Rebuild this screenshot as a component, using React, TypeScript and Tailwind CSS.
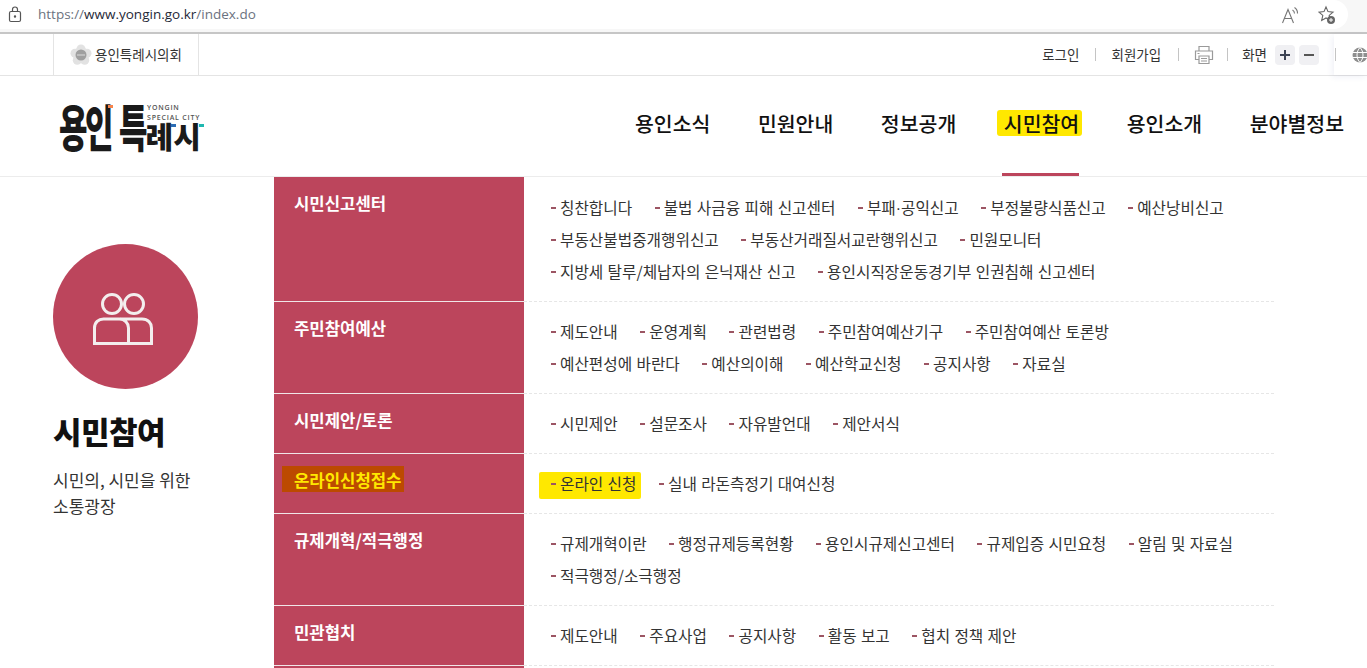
import React from "react";

const font = { fontFamily: '"Noto Sans CJK KR", "Noto Sans", sans-serif' };

type Row = { title: string; lines: string[][]; mark?: boolean };
const rows: Row[] = [
  { title: "시민신고센터", lines: [["칭찬합니다", "불법 사금융 피해 신고센터", "부패·공익신고", "부정불량식품신고", "예산낭비신고"], ["부동산불법중개행위신고", "부동산거래질서교란행위신고", "민원모니터"], ["지방세 탈루/체납자의 은닉재산 신고", "용인시직장운동경기부 인권침해 신고센터"]] },
  { title: "주민참여예산", lines: [["제도안내", "운영계획", "관련법령", "주민참여예산기구", "주민참여예산 토론방"], ["예산편성에 바란다", "예산의이해", "예산학교신청", "공지사항", "자료실"]] },
  { title: "시민제안/토론", lines: [["시민제안", "설문조사", "자유발언대", "제안서식"]] },
  { title: "온라인신청접수", mark: true, lines: [["온라인 신청", "실내 라돈측정기 대여신청"]] },
  { title: "규제개혁/적극행정", lines: [["규제개혁이란", "행정규제등록현황", "용인시규제신고센터", "규제입증 시민요청", "알림 및 자료실"], ["적극행정/소극행정"]] },
  { title: "민관협치", lines: [["제도안내", "주요사업", "공지사항", "활동 보고", "협치 정책 제안"]] },
  { title: "", lines: [[""]] },
];

const navs = ["용인소식", "민원안내", "정보공개", "시민참여", "용인소개", "분야별정보"];

function Item({ text, hl }: { text: string; hl?: boolean }) {
  const parts = text.split("·");
  return (
    <span className={hl ? "relative flex items-center" : "flex items-center"}>
      {hl && <span className="absolute left-[-11px] right-[-5px] top-[0px] bottom-[-3px] bg-[#ffe800] rounded-[2px]" />}
      <span className="relative ml-[1px] w-[5px] h-[2px] bg-[#9c5563] mr-[4px]" />
      <span className="relative">
        {parts.length > 1 ? (
          <>
            {parts[0]}
            <span style={{ fontFamily: '"Liberation Sans", sans-serif' }}>·</span>
            {parts[1]}
          </>
        ) : (
          text
        )}
      </span>
    </span>
  );
}

function Divider() {
  return <span className="block w-px h-[13px] bg-[#c4c4c4]" />;
}

export default function App() {
  return (
    <div style={font} className="w-[1367px] h-[668px] overflow-hidden bg-white text-[#222]">
      {/* browser bar */}
      <div className="h-[34px] bg-[#f7f7f7] border-b-2 border-[#c6c6c6]">
        <div className="h-[29px] w-[1348px] bg-white rounded-r-[15px] flex items-center">
          <svg className="ml-[8px]" width="14" height="17" viewBox="0 0 14 17" fill="none" stroke="#555" strokeWidth="1.2">
            <rect x="1.5" y="5.5" width="11" height="10" rx="1.5" />
            <path d="M4.5 5.5V3.5a2.5 2.5 0 0 1 5 0v2" />
            <circle cx="7" cy="10.5" r="0.6" fill="#555" />
          </svg>
          <span style={{ fontFamily: '"Open Sans", sans-serif' }} className="ml-[16px] text-[13.5px] text-[#6b7280]">
            https://<span className="text-[#1f2937]">www.yongin.go.kr</span>/index.do
          </span>
          <span className="ml-auto flex items-center gap-[18px] mr-[12px]">
            <svg width="18" height="18" viewBox="0 0 18 18" fill="none" stroke="#777" strokeWidth="1.1">
              <path d="M0.500 17 6 3.500 11.500 17M2.400 12.500h7.200" />
              <path d="M10.500 4a4 4 0 0 1 2 3.500M12.500 1.500a7 7 0 0 1 3 6" />
            </svg>
            <svg width="18" height="20" viewBox="0 0 18 20" fill="none" stroke="#666" strokeWidth="1.1">
              <path d="M8 2l2 4.600 5 .5-3.800 3.300 1.100 5L8 13l-4.300 2.400 1.100-5L1 7.100l5-.5z" />
              <circle cx="13" cy="15" r="4" fill="#666" stroke="none" />
              <path d="M11 15h4M13 13v4" stroke="#fff" strokeWidth="1" />
            </svg>
          </span>
        </div>
      </div>

      {/* utility bar */}
      <div className="h-[42px] border-b border-[#e4e4e4] flex items-stretch pl-[53px]">
        <div className="w-[146px] border-x border-[#e4e4e4] flex items-center pl-[16px] text-[13.5px] text-[#333]">
          <svg width="22" height="22" viewBox="0 0 22 22" className="mr-[3px]">
            <g fill="#e2e2e2">
              <circle cx="11" cy="5" r="4.500" />
              <circle cx="17" cy="9.200" r="4.500" />
              <circle cx="14.700" cy="16.300" r="4.500" />
              <circle cx="7.300" cy="16.300" r="4.500" />
              <circle cx="5" cy="9.200" r="4.500" />
              <circle cx="11" cy="11" r="8" />
            </g>
            <circle cx="11" cy="11" r="5.500" fill="#a0a0a0" />
            <path d="M7.500 11h7" stroke="#eee" strokeWidth="1.500" strokeDasharray="1 1" />
          </svg>
          용인특례시의회
        </div>
        <div className="ml-auto flex items-center text-[13.5px] text-[#333]">
          <span>로그인</span>
          <span className="ml-[16px] mr-[15px]"><Divider /></span>
          <span>회원가입</span>
          <span className="ml-[17px] mr-[15px]"><Divider /></span>
          <svg width="20" height="20" viewBox="0 0 20 20" fill="none" stroke="#9a9a9a" strokeWidth="1.200">
            <path d="M5 6V1.500h10V6M5 14.500H1.500V6h17v8.500H15" />
            <path d="M5 11h10v7.500H5zM7 13.500h6M7 16h6M3.500 8.500h2" />
          </svg>
          <span className="ml-[13px] mr-[14px]"><Divider /></span>
          <span>화면</span>
          <span className="ml-[8px] w-[20px] h-[20px] rounded-[4px] bg-[#f0f0f3] flex items-center justify-center">
            <svg width="10" height="10" viewBox="0 0 10 10" stroke="#3c4353" strokeWidth="2"><path d="M0 5h10M5 0v10" /></svg>
          </span>
          <span className="ml-[4px] w-[20px] h-[20px] rounded-[4px] bg-[#f0f0f3] flex items-center justify-center">
            <svg width="10" height="10" viewBox="0 0 10 10" stroke="#555" strokeWidth="2"><path d="M0 5h10" /></svg>
          </span>
          <div className="ml-[15px] pl-[1px] self-stretch flex items-center shadow-[-2px_2px_6px_rgba(40,60,140,0.07)]">
            <Divider />
            <svg width="16" height="16" viewBox="0 0 16 16" className="ml-[16px] mr-[-1px]">
              <circle cx="8" cy="8" r="7.500" fill="#8f8f8f" />
              <path d="M0.500 5.500h15M0.500 10.500h15M8 0.500c-4 4-4 11 0 15M8 0.500c4 4 4 11 0 15" stroke="#fff" strokeWidth="1" fill="none" />
            </svg>
          </div>
        </div>
      </div>

      {/* main navigation */}
      <div className="h-[101px] border-b border-[#ececec] flex items-center pl-[59px] pr-[23px]">
        <div className="relative w-[150px] h-[50px] flex items-end text-[#1a1a1a] font-black leading-[30px]">
          <span className="inline-block origin-bottom scale-y-[1.6] text-[31px] tracking-[-2.500px] mb-[1px]">용인</span>
          <span className="inline-block origin-bottom scale-y-[1.6] text-[31px] tracking-[-2px] ml-[8px] mb-[1px]">특</span>
          <span className="text-[30px] tracking-[0px] mb-[1px]">례시</span>
          <span style={{ fontFamily: '"Open Sans", sans-serif' }} className="absolute left-[88px] top-[2px] text-[7px] leading-[9.500px] tracking-[0.8px] font-semibold text-[#555]">
            YONGIN<br />SPECIAL CITY
          </span>
          <span className="absolute left-[49px] top-[4px] w-[5px] h-[3px] bg-[#f5844c]" />
          <span className="absolute left-[112px] top-[23px] w-[5px] h-[3px] bg-[#2a6db5]" />
          <span className="absolute left-[140px] top-[23px] w-[5px] h-[3px] bg-[#1fb8b0]" />
        </div>
        <nav className="ml-auto flex items-stretch self-stretch gap-[47.5px] text-[20.5px] font-medium text-[#111]">
          {navs.map((n) =>
            n === "시민참여" ? (
              <span key={n} className="relative flex items-center pb-[6px]">
                <span className="absolute left-[-7px] right-[-3px] top-[34px] h-[26px] bg-[#ffe800] rounded-[3px]" />
                <span className="relative">{n}</span>
                <span className="absolute left-[-2px] right-0 bottom-0 h-[3px] bg-[#bc455c]" />
              </span>
            ) : (
              <span key={n} className="flex items-center pb-[6px]">{n}</span>
            )
          )}
        </nav>
      </div>

      {/* content */}
      <div className="flex">
        <aside className="w-[274px] pl-[53px] pt-[67px] shrink-0">
          <div className="w-[145px] h-[145px] rounded-full bg-[#bc455c] flex items-center justify-center">
            <svg className="mr-[5px] mt-[5px]" width="60" height="52" viewBox="0 0 60 52" fill="none" stroke="#f3eeee" strokeWidth="3">
              <circle cx="19" cy="11" r="9.500" />
              <circle cx="41" cy="11" r="9.500" />
              <path d="M1.500 50.500V35c0-5.500 4-9 9-9h16c5 0 9 4 9 9v15.500zM27 26h22c6 0 9.500 4 9.500 9v15.500H35" />
            </svg>
          </div>
          <h1 className="mt-[20px] text-[31px] leading-[44px] font-black text-[#111] tracking-[-0.5px]">시민참여</h1>
          <p className="mt-[14px] text-[17px] leading-[26px] text-[#333]">시민의, 시민을 위한<br />소통광장</p>
        </aside>
        <div className="w-[1000px] shrink-0">
          {rows.map((r, i) => (
            <div key={i} className="flex">
              <div className="w-[250px] shrink-0 bg-[#bc455c] border-b border-[#f0e6e8] pl-[20px] pt-[12px] text-[16.7px] font-bold leading-[28px] text-white">
                {r.mark ? (
                  <span className="relative inline-block">
                    <span className="absolute left-[-12px] right-[-3px] top-[0px] bottom-[2px] bg-[#bc4a00]" />
                    <span className="relative text-[#ffe800]">{r.title}</span>
                  </span>
                ) : (
                  r.title
                )}
              </div>
              <div className={i === 0 ? "flex-1 border-b border-dashed border-[#e6e6e6] pl-[26px] pt-[15px] pb-[13px] text-[15.7px] [word-spacing:0.8px] text-[#333]" : "flex-1 border-b border-dashed border-[#e6e6e6] pl-[26px] pt-[14px] pb-[13px] text-[15.7px] [word-spacing:0.8px] text-[#333]"}>
                {r.lines.map((line, j) => (
                  <div key={j} className="h-[32px] flex items-center gap-[21.5px]">
                    {line.filter(Boolean).map((t) => (
                      <Item key={t} text={t} hl={t === "온라인 신청"} />
                    ))}
                  </div>
                ))}
              </div>
            </div>
          ))}
        </div>
      </div>
    </div>
  );
}
